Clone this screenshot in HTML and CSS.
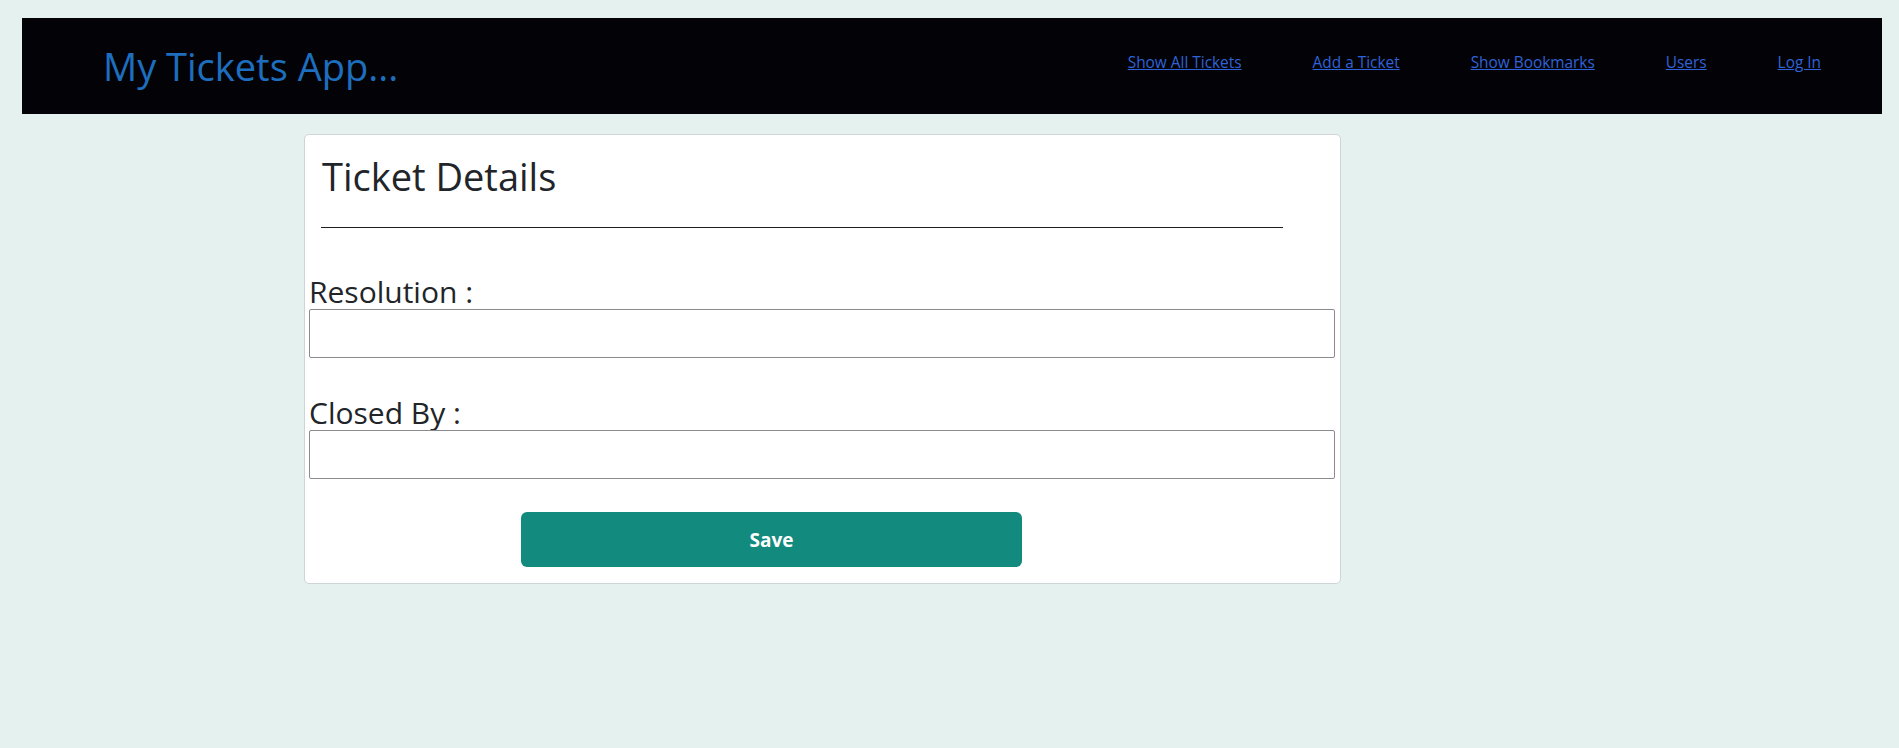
FILE: index.html
```html
<!DOCTYPE html>
<html lang="en">
<head>
<meta charset="utf-8">
<title>My Tickets App</title>
<link rel="stylesheet" href="styles.css">
</head>
<body>
<div class="page">
  <header class="topbar">
    <a class="brand" href="#">My Tickets App...</a>
    <nav class="nav">
      <a href="#">Show All Tickets</a>
      <a href="#">Add a Ticket</a>
      <a href="#">Show Bookmarks</a>
      <a href="#">Users</a>
      <a href="#">Log In</a>
    </nav>
  </header>
  <main class="card">
    <h2 class="card-title">Ticket Details</h2>
    <hr class="rule">
    <form class="form">
      <div class="field">
        <label class="field-label" for="resolution">Resolution :</label>
        <input class="field-input" id="resolution" type="text">
      </div>
      <div class="field">
        <label class="field-label" for="closedby">Closed By :</label>
        <input class="field-input" id="closedby" type="text">
      </div>
      <button class="save" type="button">Save</button>
    </form>
  </main>
</div>
</body>
</html>
```
FILE: styles.css
```css
html, body {
  margin: 0;
  padding: 0;
}
body {
  background: #e5f1ee;
  font-family: "Open Sans", "Noto Sans", sans-serif;
  color: #212529;
}
.page {
  padding: 18px 17px 0 22px;
}
.topbar {
  height: 96px;
  background: #030307;
  display: flex;
  align-items: center;
  justify-content: space-between;
  padding: 0 61px 0 81px;
  box-sizing: border-box;
}
.brand {
  font-size: 38px;
  color: #1d6ebe;
  text-decoration: none;
  line-height: 1;
}
.nav {
  display: flex;
  gap: 71px;
  padding-bottom: 8px;
}
.nav a {
  font-size: 15.4px;
  color: #2f62d8;
  text-decoration: underline;
}
.card {
  margin: 20px 0 0 282px;
  width: 1037px;
  box-sizing: border-box;
  background: #fff;
  border: 1px solid #cfd5d6;
  border-radius: 5px;
  padding: 0 5px 16px 4px;
}
.card-title {
  margin: 17px 0 0 13px;
  font-size: 38px;
  font-weight: 400;
  line-height: 48px;
}
.rule {
  margin: 27px 0 0 12px;
  width: 962px;
  border: 0;
  border-top: 1px solid #1e1e1e;
  height: 0;
}
.form {
  display: flex;
  flex-direction: column;
  margin-top: 47px;
}
.field {
  display: flex;
  flex-direction: column;
  margin-bottom: 38px;
}
.field + .field {
  margin-bottom: 33px;
}
.field-label {
  font-size: 30px;
  line-height: 34px;
  display: block;
}
.field-input {
  height: 49px;
  box-sizing: border-box;
  border: 1px solid #8b8b8f;
  border-radius: 2px;
  background: #fff;
  margin: 0;
  font-size: 16px;
  padding: 6px 10px;
}
.save {
  margin-left: 212px;
  width: 501px;
  height: 55px;
  border: 0;
  border-radius: 6px;
  background: #138a7e;
  color: #fff;
  font-family: "Open Sans", "Noto Sans", sans-serif;
  font-weight: 700;
  font-size: 19px;
}
```
